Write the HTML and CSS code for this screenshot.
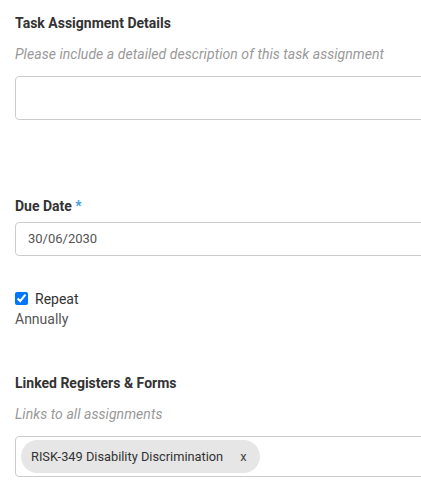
FILE: index.html
```html
<!DOCTYPE html>
<html>
<head>
<meta charset="utf-8">
<link rel="stylesheet" href="styles.css">
</head>
<body>
<div class="form">
  <div class="label first">Task Assignment Details</div>
  <div class="hint">Please include a detailed description of this task assignment</div>
  <div class="textarea"></div>

  <div class="label due">Due Date <span class="req">*</span></div>
  <div class="input">30/06/2030</div>

  <label class="check"><input type="checkbox" checked> <span>Repeat</span></label>
  <div class="freq">Annually</div>

  <div class="label linked">Linked Registers &amp; Forms</div>
  <div class="hint">Links to all assignments</div>
  <div class="tags">
    <span class="chip"><span class="chip-text">RISK-349 Disability Discrimination</span><span class="chip-x">x</span></span>
  </div>
</div>
</body>
</html>
```

FILE: styles.css
```css
html, body {
  margin: 0;
  padding: 0;
  background: #fff;
  overflow: hidden;
}
body {
  font-family: Roboto, "Liberation Sans", sans-serif;
  font-size: 14px;
  line-height: 20px;
  color: #333;
}
.form {
  width: 440px;
  padding: 13px 0 0 15px;
  display: flex;
  flex-direction: column;
}
.label {
  font-weight: 700;
  color: #333;
}
.req {
  color: #3d9be0;
}
.hint {
  margin-top: 11px;
  font-style: italic;
  color: #999;
  letter-spacing: 0.05px;
}
.textarea {
  margin-top: 12px;
  height: 42px;
  border: 1px solid #ccc;
  border-radius: 4px;
}
.due {
  margin-top: 76px;
}
.input {
  margin-top: 6px;
  height: 32px;
  border: 1px solid #ccc;
  border-radius: 4px;
  padding-left: 12px;
  font-size: 13px;
  line-height: 32px;
  color: #555;
}
.check {
  margin-top: 32px;
  display: flex;
  align-items: center;
  gap: 7px;
  color: #333;
  height: 21px;
}
.check input {
  margin: 0;
  width: 13px;
  height: 13px;
  accent-color: #0075ff;
}
.freq {
  color: #555;
  height: 21px;
}
.linked {
  margin-top: 43px;
}
.tags {
  margin-top: 12px;
  border: 1px solid #ccc;
  border-radius: 4px;
  padding: 3px 5px;
  box-sizing: border-box;
  height: 41px;
  display: flex;
  align-items: flex-start;
}
.chip {
  display: inline-flex;
  align-items: center;
  height: 33px;
  background: #e6e6e6;
  border-radius: 17px;
  padding: 0 13px 0 10px;
  font-size: 12.8px;
  color: #333;
}
.chip-x {
  margin-left: 17px;
  color: #444;
}
```
